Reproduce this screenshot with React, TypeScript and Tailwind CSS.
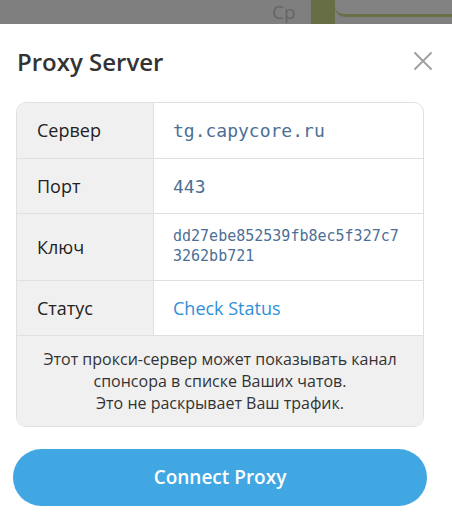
import React from "react";

const rows: { label: string; value: string; kind: "mono" | "monoSmall" | "link" }[] = [
  { label: "Сервер", value: "tg.capycore.ru", kind: "mono" },
  { label: "Порт", value: "443", kind: "mono" },
  { label: "Ключ", value: "dd27ebe852539fb8ec5f327c73262bb721", kind: "monoSmall" },
  { label: "Статус", value: "Check Status", kind: "link" },
];

export default function App() {
  return (
    <div className="w-[452px] h-[521px] overflow-hidden bg-white flex flex-col" style={{ fontFamily: '"Open Sans", sans-serif' }}>
      <div className="h-[24px] shrink-0 bg-[#7f7f7f] flex items-stretch relative overflow-hidden">
        <div className="w-[272px]" />
        <div className="w-[39px] text-[19px] leading-[22px] text-[#666666] pt-[1px]">Ср</div>
        <div className="w-[24px] bg-[#676d45]" />
        <div className="flex-1 relative">
          <div className="absolute left-0 right-0 top-[-20px] h-[37px] rounded-bl-[10px] bg-[#828282] border-b-[3px] border-[#6a6f47]" />
        </div>
      </div>
      <div className="flex-1 flex flex-col">
        <div className="flex items-center justify-between h-[74px] pl-[17px] pr-[20px]">
          <div className="text-[24px] font-semibold text-[#333333] pt-[1px]">Proxy Server</div>
          <svg width="18" height="18" viewBox="0 0 18 18">
            <path d="M1 1L17 17M17 1L1 17" stroke="#9e9e9e" strokeWidth="1.8" strokeLinecap="round" />
          </svg>
        </div>
        <div className="ml-[16px] mt-[4px] border border-[#e0e0e0] rounded-[10px] overflow-hidden w-[408px]">
          {rows.map((r, i) => (
            <div
              key={r.label}
              className={`flex ${r.kind === "monoSmall" ? "h-[67px]" : "h-[55px]"} ${i > 0 ? "border-t border-[#e0e0e0]" : ""}`}
            >
              <div className="w-[137px] shrink-0 bg-[#f0f0f0] border-r border-[#e0e0e0] flex items-center pl-[20px] text-[18px] text-[#222222]">
                {r.label}
              </div>
              <div className="flex-1 flex items-center pl-[19px] pr-[20px]">
                {r.kind === "mono" && (
                  <span className="text-[18px] text-[#4c7095]" style={{ fontFamily: '"DejaVu Sans Mono", monospace' }}>
                    {r.value}
                  </span>
                )}
                {r.kind === "monoSmall" && (
                  <span
                    className="text-[15px] leading-[20px] text-[#4c7095] break-all -mt-[3px]"
                    style={{ fontFamily: '"DejaVu Sans Mono", monospace' }}
                  >
                    {r.value}
                  </span>
                )}
                {r.kind === "link" && <span className="text-[18px] text-[#2f90d9]">{r.value}</span>}
              </div>
            </div>
          ))}
          <div className="border-t border-[#e0e0e0] bg-[#f0f0f0] h-[91px] flex flex-col items-center justify-center text-center text-[16px] leading-[22px] text-[#333333]">
            <div>Этот прокси-сервер может показывать канал</div>
            <div>спонсора в списке Ваших чатов.</div>
            <div>Это не раскрывает Ваш трафик.</div>
          </div>
        </div>
        <div className="ml-[13px] mt-[22px] w-[414px] h-[57px] rounded-full bg-[#40a7e3] flex items-center justify-center text-white text-[19px] font-semibold">
          Connect Proxy
        </div>
      </div>
    </div>
  );
}
